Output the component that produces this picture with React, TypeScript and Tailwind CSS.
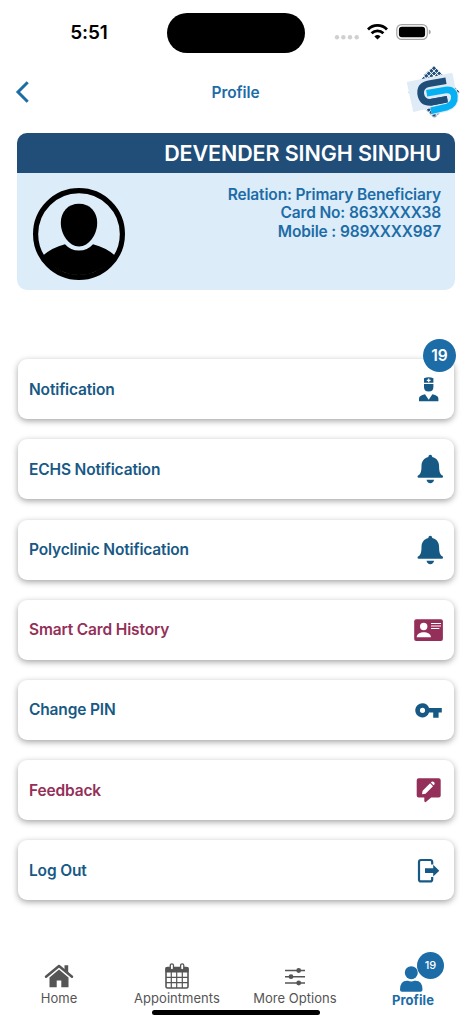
import type { ReactNode } from "react";

function StatusBar() {
  return (
    <div className="flex h-[65px] shrink-0 items-start">
      <div className="w-[167px] pt-[20px] pl-[11px] text-center text-[19px] leading-[26px] font-semibold tracking-[-0.1px] text-black">
        5:51
      </div>
      <div className="mt-[12.5px] h-[40px] w-[138px] rounded-full bg-black" />
      <svg className="ml-[29px] mt-[22px]" width="98" height="20" viewBox="0 0 98 20">
        <g fill="#d0d0d0">
          <circle cx="3" cy="15.3" r="2.2" />
          <circle cx="9.4" cy="15.3" r="2.2" />
          <circle cx="16" cy="15.3" r="2.2" />
          <circle cx="22.7" cy="15.3" r="2.2" />
        </g>
        <g fill="none" stroke="#000" strokeWidth="2.8">
          <path d="M34 7.4a13.4 13.4 0 0 1 19 0" />
          <path d="M37.6 11.3a8.4 8.4 0 0 1 11.8 0" />
        </g>
        <path d="M43.5 17.6l-3.1-3.2a4.6 4.6 0 0 1 6.2 0z" />
        <rect x="62.8" y="2.6" width="30.5" height="14.8" rx="4.8" fill="none" stroke="#a3a3a3" strokeWidth="1.2" />
        <rect x="64.9" y="4.8" width="26.2" height="10.4" rx="3" />
        <path d="M94.8 7.6q2 .8 2 2.4t-2 2.4z" fill="#a3a3a3" />
      </svg>
    </div>
  );
}

function Logo() {
  return (
    <svg className="-mt-[5px]" width="68" height="64" viewBox="0 0 204 192">
      <defs>
        <pattern id="dots" width="11" height="11" patternUnits="userSpaceOnUse" patternTransform="translate(102 19) rotate(45)">
          <rect width="8" height="8" fill="#1f4e79" />
        </pattern>
      </defs>
      <path d="M102 17l78 79-78 79-78-79z" fill="url(#dots)" />
      <path d="M20 66L157 38l17 88-134 30z" fill="#dfebf7" />
      <path d="M102 17l22 24-42 10-12-5zM80 149l46-9 8 5-31 30z" fill="url(#dots)" />
      <path d="M138 62l-52 9q-26 5-24 30 4 27 30 26l50-9" fill="none" stroke="#1f4e79" strokeWidth="20" />
      <path d="M80 100l57-10q23-3 26 18 2 24-22 33l-48 11" fill="none" stroke="#dfebf7" strokeWidth="26" />
      <path d="M92 127l50-9" fill="none" stroke="#1f4e79" strokeWidth="20" />
      <path d="M80 100l57-10q23-3 26 18 2 24-22 33l-48 11" fill="none" stroke="#05b1f2" strokeWidth="20" />
    </svg>
  );
}

function Avatar() {
  return (
    <svg width="94" height="94" viewBox="0 0 94 94">
      <circle cx="47" cy="47" r="43.4" fill="none" stroke="#000" strokeWidth="5.2" />
      <path d="M47 16.800c11 0 18.200 8 18.200 19C65.200 47.500 57 59.500 47 59.500S28.800 47.500 28.800 35.800c0-11 7.200-19 18.200-19z" />
      <path d="M11 68.500Q20 60.500 33 57.200q5.500 6.300 14 6.300t14-6.300q13 3.300 22 11.300a43 43 0 0 1-72 0z" />
    </svg>
  );
}

function Icon({ children }: { children: ReactNode }) {
  return (
    <svg width="36" height="36" viewBox="0 0 36 36" fill="currentColor">
      {children}
    </svg>
  );
}

const doctorIcon = (
  <Icon>
    <path d="M13 7.200q4.700-2 9.400 0v4.600H13z" />
    <path d="M17.700 7.400v3.800M15.800 9.300h3.800" stroke="#fff" strokeWidth="1.200" />
    <path d="M13 13h9.400v3q0 4.600-4.700 4.600T13 16z" />
    <path d="M8 30.200v-2.700q0-3 6-4.200l3.700 5.400 3.700-5.400q6 1.200 6 4.200v2.700z" />
    <path d="M15.900 24.500h3.600l-1.800 3z" fill="#fff" />
  </Icon>
);

const bellIcon = (
  <Icon>
    <path d="M19.300 3.700c1.300 0 2.100 1 1.900 2.300 4.500 1 6.900 4.500 6.900 9 0 5.400.8 8 3.500 9.600.9.900.5 2.200-.7 2.200H7.700c-1.200 0-1.600-1.300-.7-2.200 2.700-1.600 3.500-4.200 3.500-9.600 0-4.500 2.400-8 6.900-9-.2-1.300.6-2.300 1.900-2.300z" />
    <path d="M15.500 28.800h7.600q-.8 3.400-3.800 3.400t-3.800-3.400z" />
  </Icon>
);

const idCardIcon = (
  <Icon>
    <rect x="3.200" y="7.200" width="28.700" height="21.700" rx="2" />
    <g fill="#fff">
      <circle cx="12.700" cy="14.500" r="3.700" />
      <path d="M5.700 25.200c0-3.500 3.500-5 7.100-5s7.100 1.500 7.100 5z" />
    </g>
    <path d="M20 11.500h10M20 14h10M20 16.500h8.400" stroke="#fff" strokeWidth="1.200" />
  </Icon>
);

const keyIcon = (
  <Icon>
    <path
      fillRule="evenodd"
      d="M11.500 11.200c3.100 0 5.600 1.900 6.600 4.700h12.700v4.500h-3.200v5.300h-5.400v-5.300h-4.100a7.100 7.100 0 1 1-6.600-9.200zm0 4.500a2.600 2.600 0 1 0 0 5.200 2.600 2.600 0 0 0 0-5.200z"
    />
  </Icon>
);

const feedbackIcon = (
  <Icon>
    <path d="M7.700 6.200h20q2 0 2 2v15.300q0 2-2 2h-7.500l-5.400 4.600q-1.500.3-1.500-1.300v-3.300H7.700q-2 0-2-2V8.200q0-2 2-2z" />
    <path d="M11 22.300l.6-3.500 7.500-7.500 2.900 2.900-7.500 7.500zM19.800 10.600l.9-.9q1.100-.8 2.300.4t.4 2.300l-.9.900z" fill="#fff" />
  </Icon>
);

const logoutIcon = (
  <Icon>
    <path
      d="M21.200 12.500V10q0-2-2-2H10Q8 8 8 10v17.400q0 2 2 2h9.200q2 0 2-2v-2.500"
      fill="none"
      stroke="currentColor"
      strokeWidth="2.200"
    />
    <path d="M14 16.200h8.200v-3.400l6.100 5.900-6.100 5.900v-3.500H14z" />
  </Icon>
);

const menu = [
  { label: "Notification", icon: doctorIcon, color: "text-[#175985]", badge: 19 },
  { label: "ECHS Notification", icon: bellIcon, color: "text-[#175985]" },
  { label: "Polyclinic Notification", icon: bellIcon, color: "text-[#175985]" },
  { label: "Smart Card History", icon: idCardIcon, color: "text-[#942f59]" },
  { label: "Change PIN", icon: keyIcon, color: "text-[#175985]" },
  { label: "Feedback", icon: feedbackIcon, color: "text-[#942f59]" },
  { label: "Log Out", icon: logoutIcon, color: "text-[#175985]" },
];

function HomeIcon() {
  return (
    <svg width="30" height="26" viewBox="0 0 30 26" fill="currentColor">
      <path d="M2 13.800L15 3l13 10.800" fill="none" stroke="currentColor" strokeWidth="2.500" strokeLinecap="round" strokeLinejoin="round" />
      <path d="M20.500 2.200h3.700v8l-3.700-3z" />
      <path d="M15 6.500l9.500 8v9.700h-7.200v-6.700h-4.600v6.700H5.500v-9.700z" />
    </svg>
  );
}

function CalendarIcon() {
  return (
    <svg width="26" height="28" viewBox="0 0 26 28" fill="none" stroke="currentColor">
      <rect x="2" y="5.500" width="22" height="20.500" rx="1.500" strokeWidth="1.600" />
      <path d="M2 5.500h22v4.500H2z" fill="currentColor" />
      <path d="M7.300 10v16M12.700 10v16M18.300 10v16M2 15.400h22M2 20.700h22" strokeWidth="1.200" />
      <rect x="6.300" y="1.800" width="3.200" height="6" rx="1.600" fill="#fff" strokeWidth="1.300" />
      <rect x="16.600" y="1.800" width="3.200" height="6" rx="1.600" fill="#fff" strokeWidth="1.300" />
    </svg>
  );
}

function SlidersIcon() {
  return (
    <svg width="22" height="20" viewBox="0 0 22 20" fill="currentColor">
      <path d="M1 3.500h20M1 9.700h20M1 16h20" stroke="currentColor" strokeWidth="1.500" />
      <circle cx="14.700" cy="3.500" r="2.400" />
      <circle cx="7" cy="9.700" r="2.400" />
      <circle cx="14.700" cy="16" r="2.400" />
    </svg>
  );
}

function PersonIcon() {
  return (
    <svg className="-ml-[5px]" width="24" height="26" viewBox="0 0 24 26" fill="currentColor">
      <circle cx="12.300" cy="6.700" r="6.500" />
      <path d="M3 25.700q-2 0-2-2 0-9 7-9h1q3 1.500 6.500 0h1q7 0 7 9 0 2-2 2z" />
    </svg>
  );
}

export default function App() {
  return (
    <div className="flex h-[1024px] w-[472px] flex-col overflow-hidden bg-white font-['Inter',sans-serif]">
      <StatusBar />

      <header className="flex h-[68px] shrink-0 items-start justify-between pl-[15px] pr-[4px]">
        <svg className="mt-[15px]" width="56" height="24" viewBox="0 0 56 24">
          <path d="M12.700 2.200L3 12l9.700 9.700" fill="none" stroke="#1c6ca7" strokeWidth="3" />
        </svg>
        <h1 className="mt-[16px] text-[15.500px] leading-[24px] font-semibold tracking-[-0.1px] text-[#1c6ca7]">Profile</h1>
        <Logo />
      </header>

      <section className="mx-[17px] h-[157px] shrink-0 overflow-hidden rounded-[10px] bg-[#dcecf9] text-right">
        <h2 className="h-[39.500px] bg-[#204e79] pr-[14px] text-[21.500px] leading-[41px] font-semibold tracking-[-0.1px] text-white">
          DEVENDER SINGH SINDHU
        </h2>
        <div className="flex justify-between pt-[12px] pr-[14px] pl-[15px]">
          <div className="pt-[2px]">
            <Avatar />
          </div>
          <div className="pt-px text-[15.500px] leading-[18.600px] font-semibold tracking-[-0.150px] text-[#1c6ca7]">
            <p>Relation: Primary Beneficiary</p>
            <p>Card No: 863XXXX38</p>
            <p>Mobile : 989XXXX987</p>
          </div>
        </div>
      </section>

      <ul className="mx-[18px] mt-[69.300px] flex flex-col gap-[20.200px]">
        {menu.map((item) => (
          <li
            key={item.label}
            className={`relative flex h-[60px] items-center justify-between rounded-[9px] bg-white pr-[7px] pl-[11px] shadow-[0_2px_6px_rgba(0,0,0,0.36)] ${item.color}`}
          >
            <span className="text-[15.500px] font-semibold tracking-[-0.150px]">{item.label}</span>
            {item.icon}
            {item.badge && (
              <span className="absolute -top-[20px] -right-[2px] flex size-[33px] items-center justify-center rounded-full bg-[#1c6ca7] text-[15.500px] font-semibold text-white">
                {item.badge}
              </span>
            )}
          </li>
        ))}
      </ul>

      <nav className="relative mt-auto grid h-[74px] shrink-0 grid-cols-4 text-[13px] text-[#555]">
        <a className="flex flex-col items-center justify-start pt-[13px]">
          <HomeIcon />
          <span className="leading-[18px]">Home</span>
        </a>
        <a className="flex flex-col items-center pt-[12px]">
          <CalendarIcon />
          <span className="-mt-px leading-[18px] tracking-[0.030px]">Appointments</span>
        </a>
        <a className="flex flex-col items-center pt-[17px]">
          <SlidersIcon />
          <span className="mt-[2px] leading-[18px] tracking-[0.030px]">More Options</span>
        </a>
        <a className="relative flex flex-col items-center pt-[15.500px] font-bold text-[#1c6ca7]">
          <PersonIcon />
          <span className="leading-[17px] tracking-[0.100px]">Profile</span>
          <span className="absolute top-[1.500px] left-[63px] flex size-[27px] items-center justify-center rounded-full bg-[#1c6ca7] text-[11px] font-medium text-white">
            19
          </span>
        </a>
        <div className="absolute bottom-[9px] left-[152px] h-[5.500px] w-[168px] rounded-full bg-black" />
      </nav>
    </div>
  );
}
